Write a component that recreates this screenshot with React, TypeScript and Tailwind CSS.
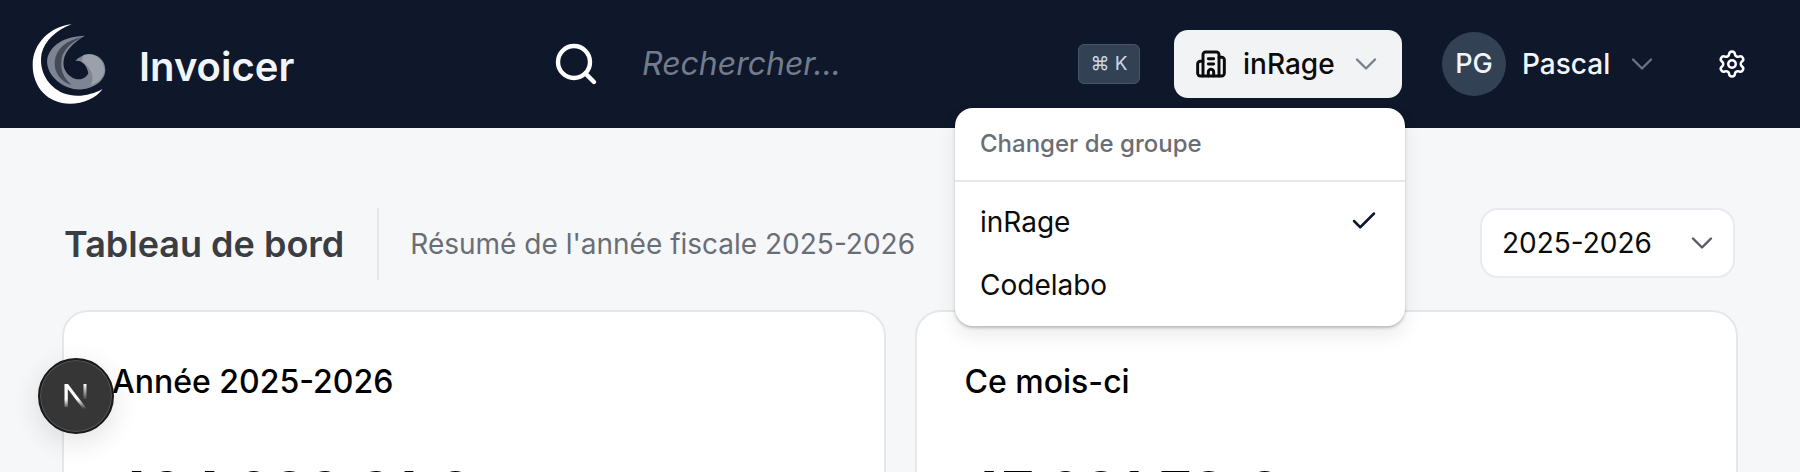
import { Building2, Check, ChevronDown, Search, Settings } from 'lucide-react';

function Logo() {
  return (
    <svg className="mt-[2px]" width="100" height="100" viewBox="0 0 300 300" aria-hidden>
      <path d="M155 28 C90 35 38 85 38 150 C38 218 85 266 150 266 C190 266 228 250 248 222 C215 240 170 250 130 235 C85 215 55 170 65 115 C75 75 110 45 155 28 Z" fill="#ffffff" />
      <path d="M195 62 C130 65 92 90 82 130 C76 168 108 210 160 222 C205 230 256 204 256 165 C256 135 232 115 205 118 C190 120 175 128 165 138 C185 135 200 150 205 175 C190 205 150 195 135 165 C120 130 145 90 195 62 Z" fill="#7f8492" />
      <path d="M190 65 C140 75 108 100 104 140 C102 172 122 200 155 210 C130 190 120 165 125 130 C130 105 155 80 190 65 Z" fill="#454a59" />
      <path d="M190 120 C225 110 252 135 253 165 C253 186 235 204 210 212 C225 196 220 160 185 140 Z" fill="#9ca0aa" />
    </svg>
  );
}

function NextBadge() {
  return (
    <div className="absolute top-[358px] left-[38px] flex h-[76px] w-[76px] items-center justify-center rounded-full border-2 border-[#1a1a1a] bg-[#363636] shadow-[inset_0_0_0_1px_#555,0_8px_28px_rgba(0,0,0,0.12)]">
      <svg width="28" height="28" viewBox="0 0 28 28" aria-hidden>
        <defs>
          <linearGradient id="next-fade" x1="0" y1="0" x2="0" y2="1">
            <stop offset="0.6" stopColor="#fff" />
            <stop offset="1" stopColor="#fff" stopOpacity="0" />
          </linearGradient>
          <linearGradient id="next-bar" x1="0" y1="0" x2="0" y2="1">
            <stop offset="0" stopColor="#fff" />
            <stop offset="1" stopColor="#fff" stopOpacity="0.1" />
          </linearGradient>
        </defs>
        <path d="M2.5 25 V2 H6 L25 27 H21 L5.8 7 V25 Z" fill="url(#next-fade)" />
        <rect x="21.5" y="2" width="3" height="15" fill="url(#next-bar)" />
      </svg>
    </div>
  );
}

function StatCard({ title, amount }: { title: string; amount: string }) {
  return (
    <div className="h-[300px] flex-1 rounded-[26px] border-2 border-[#e5e7eb] bg-white px-[48px] pt-[50px]">
      <div className="text-[32px] leading-[40px] font-[450] text-black">{title}</div>
      <div className="mt-[60px] text-[56px] leading-[60px] font-semibold text-black">{amount}</div>
    </div>
  );
}

export default function App() {
  return (
    <div className="relative h-[472px] w-[1800px] overflow-hidden bg-[#f6f7f9] font-['Inter',sans-serif]">
      <header className="flex h-[128px] items-center bg-[#0f172a]">
        <div className="ml-[20px] flex w-[531px] items-center gap-[19px]">
          <Logo />
          <span className="mt-[6px] text-[40px] font-semibold text-[#f1f5f9]">Invoicer</span>
        </div>
        <Search className="ml-[1px] text-white" size={48} strokeWidth={2.2} />
        <span className="ml-[42px] w-[436px] text-[32px] text-[#737c8c] italic">Rechercher...</span>
        <kbd className="flex h-[40px] w-[62px] items-center justify-center rounded-[6px] border border-[#475569] bg-[#334155] font-['Inter',sans-serif] text-[19px] text-[#cbd5e1]">⌘ K</kbd>
        <button className="ml-[34px] flex h-[68px] w-[228px] items-center rounded-[14px] bg-[#f1f3f5] pl-[21px] text-[#0b0b0b]">
          <Building2 size={32} strokeWidth={2.2} />
          <span className="ml-[16px] text-[28px] font-medium">inRage</span>
          <ChevronDown className="ml-[13px] text-[#7a808c]" size={36} strokeWidth={1.6} />
        </button>
        <div className="ml-[40px] flex h-[64px] w-[64px] items-center justify-center rounded-full bg-[#334155] text-[27px] font-medium text-[#f1f5f9]">PG</div>
        <span className="ml-[16px] text-[28px] font-medium text-[#f1f5f9]">Pascal</span>
        <ChevronDown className="ml-[14px] text-[#6b7280]" size={36} strokeWidth={1.6} />
        <Settings className="ml-[57px] text-white" size={30} strokeWidth={2} />
      </header>

      <main className="px-[62px] pt-[80px]">
        <div className="flex h-[72px] items-center">
          <h1 className="ml-[2px] text-[36px] font-semibold text-[#3a3d42]">Tableau de bord</h1>
          <div className="ml-[33px] h-[72px] w-[2px] bg-[#e5e7eb]" />
          <p className="ml-[31px] text-[28px] text-[#696e76]">Résumé de l'année fiscale 2025-2026</p>
          <div className="mr-[3px] mb-[2px] ml-auto flex h-[70px] w-[255px] items-center justify-between rounded-[18px] border-2 border-[#e8eaed] bg-white pr-[13px] pl-[20px] text-[28px] text-[#0b0b0b]">
            2025-2026
            <ChevronDown className="text-[#565b64]" size={36} strokeWidth={1.6} />
          </div>
        </div>
        <div className="mt-[30px] flex gap-[29px]">
          <StatCard title="Année 2025-2026" amount="494 283,31 €" />
          <StatCard title="Ce mois-ci" amount="47 281,78 €" />
        </div>
      </main>

      <div className="absolute top-[108px] left-[955px] w-[450px] rounded-[18px] bg-white shadow-[0_2px_3px_rgba(0,0,0,0.22),0_10px_20px_rgba(0,0,0,0.08)]">
        <div className="flex h-[74px] items-center border-b-2 border-[#e5e7eb] pl-[25px] text-[24px] font-medium text-[#696e76]">Changer de groupe</div>
        <div className="flex h-[70px] items-end justify-between pr-[26px] pb-[9px] pl-[25px] text-[28px] text-[#0b0b0b]">
          inRage
          <Check className="mb-[7px] text-[#0f172a]" size={30} strokeWidth={2} />
        </div>
        <div className="flex h-[74px] items-start pt-[12px] pl-[25px] text-[28px] text-[#0b0b0b]">Codelabo</div>
      </div>

      <NextBadge />
    </div>
  );
}
